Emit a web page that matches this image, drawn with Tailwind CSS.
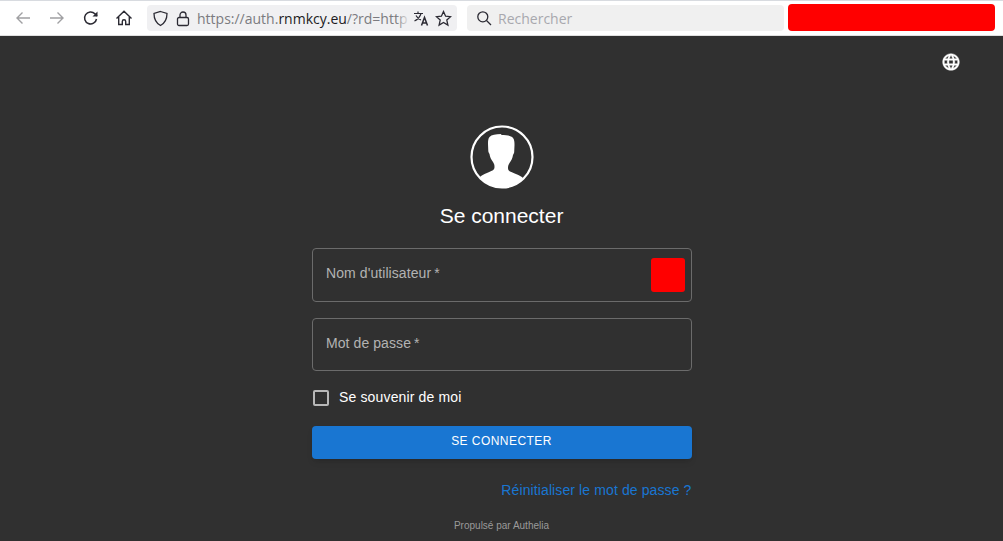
<!DOCTYPE html>
<html lang="fr">
<head>
  <meta charset="UTF-8">
  <title>Se connecter</title>
  <script src="https://cdn.jsdelivr.net/npm/@tailwindcss/browser@4"></script>
</head>
<body class="h-[541px] w-[1003px] overflow-hidden bg-[#303030] font-['Liberation_Sans',sans-serif]">
  <!-- browser toolbar -->
  <div class="flex h-[36px] items-center border-t border-b border-t-[#d8dbe0] border-b-[#e0e0e0] bg-white">
    <div class="flex w-[147px] shrink-0 items-center text-[#a0a0a3]">
      <svg class="ml-[14px]" width="18" height="18" viewBox="0 0 18 18" fill="none" stroke="currentColor" stroke-width="1.4"><path d="M16 9H3M8.500 3.500 3 9l5.500 5.500"/></svg>
      <svg class="ml-[16px]" width="18" height="18" viewBox="0 0 18 18" fill="none" stroke="currentColor" stroke-width="1.4"><path d="M2 9h13M9.500 3.500 15 9l-5.500 5.500"/></svg>
      <svg class="ml-[16px] text-[#2b2a33]" width="18" height="18" viewBox="0 0 18 18" fill="none" stroke="currentColor" stroke-width="1.5"><path d="M14.500 10a6 6 0 1 1-1.600-5.200L15 7"/><path d="M15.500 2.500V7.500H10.500" fill="currentColor" stroke="none"/></svg>
      <svg class="ml-[15px] text-[#2b2a33]" width="18" height="18" viewBox="0 0 18 18" fill="none" stroke="currentColor" stroke-width="1.4"><path d="M1.500 9.500 9 2.200l7.500 7.300M3.700 8v7.500h3.600v-3a1.700 1.700 0 0 1 3.400 0v3h3.600V8"/></svg>
    </div>
    <div class="flex h-[26px] w-[310px] shrink-0 items-center rounded-[4px] bg-[#f0f0f2] text-[#2b2a33]">
      <svg class="ml-[5px] shrink-0" width="17" height="17" viewBox="0 0 17 17" fill="none" stroke="currentColor" stroke-width="1.3"><path d="M8.500 1.500 15 3.500c0 5.500-1.800 9.500-6.500 12C3.800 13 2 9 2 3.500z"/></svg>
      <svg class="ml-[6px] shrink-0" width="16" height="17" viewBox="0 0 16 17" fill="none" stroke="currentColor" stroke-width="1.3"><rect x="2.500" y="7.500" width="11" height="8" rx="1.500"/><path d="M5 7.500V5a3 3 0 0 1 6 0v2.500"/></svg>
      <div class="relative ml-[6px] w-[213px] shrink-0">
        <span class="block whitespace-nowrap font-['Open_Sans',sans-serif] text-[14px] text-[#7b7b80]">https://auth.<span class="text-[#1c1b22]">rnmkcy.eu</span>/?rd=http</span>
        <div class="absolute top-0 right-0 h-full w-[14px] bg-gradient-to-r from-transparent to-[#f0f0f2]"></div>
      </div>
      <svg class="ml-[3px] shrink-0" width="17" height="17" viewBox="0 0 17 17" fill="none" stroke="currentColor" stroke-width="1.2"><path d="M1 3.500h9M5 1.500v2M8 3.500C7 7 4.500 9.500 1.500 11M3 5.500c1 2 2.500 3.500 5 4.500"/><path d="m8.500 15.500 3-8 3 8M9.500 13h4" stroke-width="1.500"/></svg>
      <svg class="ml-[5px] shrink-0" width="17" height="17" viewBox="0 0 17 17" fill="none" stroke="currentColor" stroke-width="1.3"><path d="m8.500 1.500 2.100 4.700 5 .5-3.800 3.400 1.100 5-4.400-2.600-4.400 2.600 1.100-5L1.400 6.700l5-.5z"/></svg>
    </div>
    <div class="ml-[10px] flex h-[26px] w-[317px] shrink-0 items-center rounded-[4px] bg-[#f0f0f0] text-[#2b2a33]">
      <svg class="ml-[9px] shrink-0" width="16" height="16" viewBox="0 0 16 16" fill="none" stroke="currentColor" stroke-width="1.3"><circle cx="6.800" cy="6.800" r="5"/><path d="m10.500 10.500 4.500 4.500"/></svg>
      <span class="ml-[6px] font-['Open_Sans',sans-serif] text-[14px] text-[#a8a8ae]">Rechercher</span>
    </div>
    <div class="-mt-[2px] ml-[4px] h-[27px] w-[207px] shrink-0 rounded-[4px] bg-[#ff0000]"></div>
  </div>

  <!-- language switcher -->
  <div class="flex h-[52px] justify-end pt-[16px] pr-[42px]">
    <svg width="20" height="20" viewBox="0 0 24 24" fill="#fff" stroke="#fff" stroke-width=".5"><path d="M11.990 2C6.470 2 2 6.480 2 12s4.470 10 9.990 10C17.520 22 22 17.520 22 12S17.520 2 11.990 2zm6.930 6h-2.950c-.32-1.250-.78-2.450-1.380-3.560 1.840.63 3.370 1.910 4.330 3.560zM12 4.040c.83 1.200 1.480 2.530 1.910 3.960h-3.820c.43-1.430 1.080-2.760 1.910-3.960zM4.260 14C4.100 13.360 4 12.690 4 12s.1-1.360.26-2h3.380c-.08.660-.14 1.320-.14 2s.06 1.340.14 2H4.260zm.82 2h2.950c.32 1.250.78 2.450 1.380 3.560-1.840-.63-3.370-1.900-4.330-3.560zm2.950-8H5.080c.96-1.660 2.490-2.930 4.330-3.560C8.810 5.550 8.350 6.750 8.030 8zM12 19.960c-.83-1.200-1.480-2.530-1.910-3.960h3.820c-.43 1.430-1.080 2.760-1.910 3.960zM14.340 14H9.660c-.09-.660-.16-1.320-.16-2s.07-1.350.16-2h4.680c.09.650.16 1.320.16 2s-.07 1.340-.16 2zm.25 5.560c.6-1.110 1.060-2.310 1.380-3.560h2.950c-.96 1.650-2.490 2.930-4.330 3.560zM16.360 14c.08-.660.14-1.320.14-2s-.06-1.340-.14-2h3.380c.16.640.26 1.310.26 2s-.1 1.360-.26 2h-3.380z"/></svg>
  </div>

  <!-- login form -->
  <div class="mx-auto flex w-[380px] flex-col items-center">
    <svg class="mt-[37px]" width="64" height="64" viewBox="0 0 64 64">
      <circle cx="32" cy="32" r="30.500" fill="none" stroke="#fff" stroke-width="2.200"/>
      <path fill="#fff" d="M31.500 9c-6 0-10 .8-12 3-1.300 1.500-1.500 4-1.500 7 0 2.500.3 4.500.3 7 0 1 .7 2 1.200 3 .5 3 1.500 5.500 3.500 8 1 1.500 1.500 3 1.500 5 0 1.500-.5 2.500-2 3.500-3 1.700-9 3-13 7C16.500 59 24.500 63 32 63s15.500-4 21.500-9.500c-4-4-10-5.300-13.500-7-1.500-1-2-2-2-3.500 0-2 .5-3.500 1.500-5 2-2.500 3-5 3.500-8 .5-1 1.200-2 1.200-3 0-2.500.3-4.500.3-7 0-3-.2-5.500-1.500-7-2-2.200-6-3-12-3z"/>
    </svg>
    <h1 class="mt-[12px] text-[21px] leading-[30px] text-white">Se connecter</h1>

    <div class="mt-[17px] flex h-[54px] w-full items-center justify-between rounded-[4px] border border-[#6b6b6b] pr-[6px] pl-[13.500px]">
      <span class="-mt-[3px] text-[14px] tracking-[.08px] text-[#b3b3b3]">Nom d'utilisateur<span class="ml-[3px]">*</span></span>
      <div class="h-[34px] w-[34px] rounded-[3px] bg-[#ff0000]"></div>
    </div>
    <div class="mt-[16px] flex h-[53px] w-full items-center rounded-[4px] border border-[#6b6b6b] pl-[13.500px]">
      <span class="-mt-[3px] text-[14px] tracking-[.08px] text-[#b3b3b3]">Mot de passe<span class="ml-[3px]">*</span></span>
    </div>

    <label class="mt-[17px] flex h-[20px] w-full items-center">
      <span class="ml-px h-[16px] w-[16px] rounded-[2px] border-2 border-[#b8b8b8]"></span>
      <span class="ml-[10.500px] -mt-[2px] text-[14px] tracking-[.15px] text-white">Se souvenir de moi</span>
    </label>

    <button class="mt-[18px] h-[33px] w-full rounded-[4px] bg-[#1976d2] pb-[4px] text-[12px] tracking-[.45px] text-white shadow-md">SE CONNECTER</button>

    <a class="mt-[21px] block w-full text-right text-[14px] leading-[20px] tracking-[.11px] text-[#1976d2]">Réinitialiser le mot de passe ?</a>

    <p class="mt-[19px] text-[10px] leading-[14px] text-[#9a9a9a]">Propulsé par Authelia</p>
  </div>
</body>
</html>
